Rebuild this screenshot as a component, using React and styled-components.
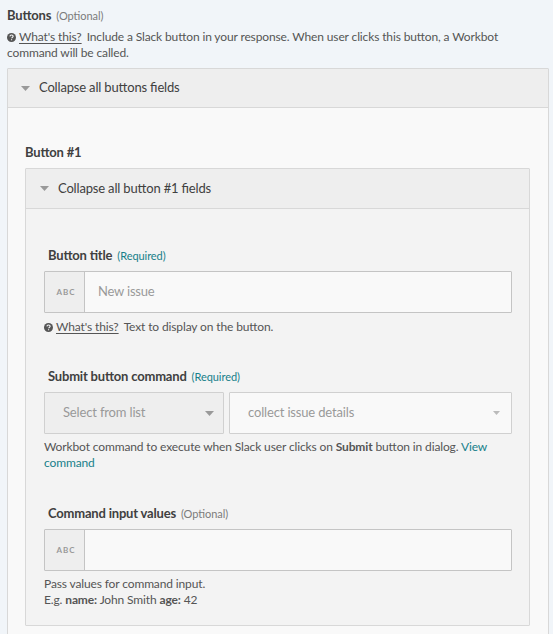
import React from "react";
import styled, { createGlobalStyle } from "styled-components";

const GlobalStyle = createGlobalStyle`
  * { box-sizing: border-box; }
  body {
    margin: 0;
    height: 634px;
    overflow: hidden;
    background: #f1f5f9;
    color: #454545;
    font-family: Lato, sans-serif;
    font-size: 12px;
    font-feature-settings: "liga" 1, "clig" 1;
  }
`;

const Page = styled.main`
  width: 553px;
  height: 634px;
  overflow: hidden;
  padding: 7px 4px 0 7px;
`;

const Label = styled.div`
  display: flex;
  align-items: baseline;
  height: 16px;
  line-height: 16px;
  white-space: nowrap;
  padding-left: ${(p) => p.$inset || 0}px;
`;

const LabelText = styled.span`
  font-size: 13px;
  font-weight: 700;
  color: #404040;
  letter-spacing: -0.19px;
`;

const Note = styled.span`
  margin-left: 5px;
  font-size: 11px;
  letter-spacing: -0.06px;
  color: ${(p) => (p.$required ? "#17808a" : "#7b7b7b")};
`;

const Hint = styled.div`
  margin-top: ${(p) => p.$top}px;
  line-height: 16px;
  color: #555;
  white-space: nowrap;
  letter-spacing: -0.13px;
`;

const HintLine = styled.div`
  height: 16px;
`;

const HelpSvg = styled.svg`
  display: inline-block;
  width: 9px;
  height: 9px;
  margin-right: 3px;
  vertical-align: -1px;
`;

const HelpLink = styled.span`
  margin-right: 5px;
  text-decoration: underline;
  text-decoration-thickness: 1px;
  text-underline-offset: 2px;
`;

const Link = styled.a`
  color: #17808a;
`;

const Panel = styled.section`
  border: 1px solid #d8d8d8;
  border-radius: 1px;
  background: ${(p) => p.$bg};
  margin-top: ${(p) => p.$top}px;
  height: ${(p) => p.$height}px;
`;

const PanelHeader = styled.header`
  display: flex;
  align-items: center;
  height: ${(p) => p.$height}px;
  padding-left: ${(p) => p.$left}px;
  gap: 9px;
  border-bottom: 1px solid #d8d8d8;
  background: #eeeeee;
  font-size: 13px;
  color: #404040;
  letter-spacing: -0.17px;
`;

const HeaderText = styled.span`
  padding-bottom: ${(p) => p.$lift || 0}px;
`;

const PanelBody = styled.div`
  padding: ${(p) => p.$pad};
`;

const Caret = styled.svg`
  display: block;
  flex: none;
  width: ${(p) => p.$w}px;
  height: ${(p) => (p.$w > 8 ? 5 : 4)}px;
`;

const Field = styled.div`
  margin-top: ${(p) => p.$top || 0}px;
`;

const InputBox = styled.div`
  display: flex;
  height: 42px;
  margin-top: 8px;
  border: 1px solid #c4c4c4;
  border-radius: 1px;
  background: #f9f9f9;
`;

const TypeTag = styled.div`
  display: flex;
  align-items: center;
  justify-content: center;
  width: 40px;
  border-right: 1px solid #c4c4c4;
  background: #eeeeee;
  color: #999;
  font-size: 8px;
  font-weight: 700;
  letter-spacing: 1px;
  padding: 0 0 1px 3px;
`;

const Value = styled.div`
  display: flex;
  align-items: center;
  padding: 0 0 2px 13px;
  font-size: 13px;
  color: #999;
  letter-spacing: -0.2px;
`;

const SelectRow = styled.div`
  display: grid;
  grid-template-columns: 180px 283px;
  gap: 5px;
  margin-top: 8px;
`;

const Select = styled.div`
  display: flex;
  align-items: center;
  justify-content: space-between;
  height: 42px;
  padding: 0 ${(p) => p.$right}px 0 18px;
  border: 1px solid #d0d0d0;
  border-radius: 1px;
  background: ${(p) => p.$bg};
  font-size: 13px;
  color: #999;
  letter-spacing: -0.16px;
`;

function Triangle({ w = 9, color = "#999" }) {
  return (
    <Caret $w={w} viewBox="0 0 10 5" preserveAspectRatio="none">
      <path d="M0 0h10L5 5z" fill={color} />
    </Caret>
  );
}

function Help() {
  return (
    <>
      <HelpSvg viewBox="0 0 18 18">
        <circle cx="9" cy="9" r="9" fill="#555" />
        <path
          d="M5.8 6.7C6 4.8 7.2 4 9 4c2 0 3.3 1 3.3 2.7 0 2.1-3.1 2.2-3.1 4M9.1 12.3v2.4"
          fill="none"
          stroke="#f4f5f6"
          strokeWidth="2.3"
        />
      </HelpSvg>
      <HelpLink>What's this?</HelpLink>
    </>
  );
}

function TextInput({ value }) {
  return (
    <InputBox>
      <TypeTag>ABC</TypeTag>
      <Value>{value}</Value>
    </InputBox>
  );
}

export default function App() {
  return (
    <Page>
      <GlobalStyle />
      <Label>
        <LabelText>Buttons</LabelText>
        <Note>(Optional)</Note>
      </Label>
      <Hint $top={6}>
        <HintLine>
          <Help />
          Include a Slack button in your response. When user clicks this button, a Workbot
        </HintLine>
        <HintLine>command will be called.</HintLine>
      </Hint>
      <Panel $bg="#f9f9f9" $top={7} $height={600}>
        <PanelHeader $height={39} $left={13}>
          <Triangle />
          <HeaderText $lift={2}>Collapse all buttons fields</HeaderText>
        </PanelHeader>
        <PanelBody $pad="36px 18px 0 17px">
          <Label>
            <LabelText>Button #1</LabelText>
          </Label>
          <Panel $bg="#f3f3f3" $top={8} $height={458}>
            <PanelHeader $height={40} $left={14}>
              <Triangle />
              <HeaderText $lift={2}>Collapse all button #1 fields</HeaderText>
            </PanelHeader>
            <PanelBody $pad="38px 17px 0 18px">
              <Field>
                <Label $inset={4}>
                  <LabelText>Button title</LabelText>
                  <Note $required>(Required)</Note>
                </Label>
                <TextInput value="New issue" />
                <Hint $top={6}>
                  <HintLine>
                    <Help />
                    Text to display on the button.
                  </HintLine>
                </Hint>
              </Field>
              <Field $top={33}>
                <Label $inset={4}>
                  <LabelText>Submit button command</LabelText>
                  <Note $required>(Required)</Note>
                </Label>
                <SelectRow>
                  <Select $bg="#eeeeee" $right={9}>
                    <HeaderText $lift={2}>Select from list</HeaderText>
                    <Triangle />
                  </Select>
                  <Select $bg="#f9f9f9" $right={11}>
                    <HeaderText $lift={2}>collect issue details</HeaderText>
                    <Triangle w={7} color="#bbb" />
                  </Select>
                </SelectRow>
                <Hint $top={5}>
                  <HintLine>
                    Workbot command to execute when Slack user clicks on <b>Submit</b> button in
                    dialog. <Link>View</Link>
                  </HintLine>
                  <HintLine>
                    <Link>command</Link>
                  </HintLine>
                </Hint>
              </Field>
              <Field $top={34}>
                <Label $inset={4}>
                  <LabelText>Command input values</LabelText>
                  <Note>(Optional)</Note>
                </Label>
                <TextInput value="" />
                <Hint $top={5}>
                  <HintLine>Pass values for command input.</HintLine>
                  <HintLine>
                    E.g. <b>name:</b> John Smith <b>age:</b> 42
                  </HintLine>
                </Hint>
              </Field>
            </PanelBody>
          </Panel>
        </PanelBody>
      </Panel>
    </Page>
  );
}
